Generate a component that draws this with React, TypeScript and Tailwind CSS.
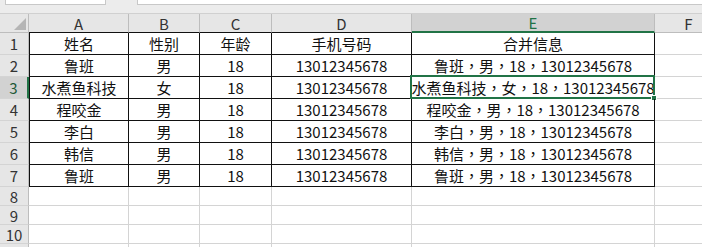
import React from 'react';

const people = [
  ['姓名', '性别', '年龄', '手机号码', '合并信息'],
  ['鲁班', '男', '18', '13012345678', '鲁班，男，18，13012345678'],
  ['水煮鱼科技', '女', '18', '13012345678', '水煮鱼科技，女，18，13012345678'],
  ['程咬金', '男', '18', '13012345678', '程咬金，男，18，13012345678'],
  ['李白', '男', '18', '13012345678', '李白，男，18，13012345678'],
  ['韩信', '男', '18', '13012345678', '韩信，男，18，13012345678'],
  ['鲁班', '男', '18', '13012345678', '鲁班，男，18，13012345678'],
];

const widths = ['w-[100px]', 'w-[71px]', 'w-[72px]', 'w-[140px]', 'w-[243px]'];
const letters = ['A', 'B', 'C', 'D', 'E'];

const RowHead = ({ n, active }: { n?: number; active?: boolean }) => (
  <div
    className={
      'flex h-full w-[29px] shrink-0 items-center justify-center border-b border-[#d4d4d4] text-[15px] ' +
      (active
        ? 'border-r-2 border-r-[#217346] bg-[#d2d2d2] text-[#1d5a38]'
        : 'border-r border-r-[#bdbdbd] bg-[#e6e6e6] text-[#333]')
    }
  >
    {n}
  </div>
);

const App = () => {
  return (
    <div className="h-[247px] w-[702px] overflow-hidden bg-white font-['Noto_Sans_CJK_SC',sans-serif] text-[#111]">
      {/* formula bar strip */}
      <div className="flex h-[13px] bg-[#ececec]">
        <div className="ml-[5px] h-[5px] w-[101px] border-b border-x border-[#c8c8c8] bg-white" />
        <div className="ml-[31px] h-[5px] flex-1 border-b border-l border-[#c8c8c8] bg-white" />
      </div>

      {/* column headers */}
      <div className="flex h-[20px] border-t border-[#d0d0d0] text-[15px] leading-none text-[#333]">
        <div className="relative w-[29px] shrink-0 border-r border-b border-[#bdbdbd] bg-[#e6e6e6]">
          <svg className="absolute right-[2px] bottom-[2px]" width="12" height="12" viewBox="0 0 12 12">
            <polygon points="12,0 12,12 0,12" fill="#b5b5b5" />
          </svg>
        </div>
        {letters.map((l, i) =>
          l === 'E' ? (
            <div
              key={l}
              className={`${widths[i]} flex shrink-0 items-center justify-center border-r border-r-[#bdbdbd] border-b-2 border-b-[#217346] bg-[#d2d2d2] text-[#217346]`}
            >
              {l}
            </div>
          ) : (
            <div
              key={l}
              className={`${widths[i]} flex shrink-0 items-center justify-center border-r border-r-[#bdbdbd] border-b border-b-[#111] bg-[#e6e6e6]`}
            >
              {l}
            </div>
          ),
        )}
        <div className="flex flex-1 items-center justify-center border-b border-[#bdbdbd] bg-[#e6e6e6] pl-[20px]">F</div>
      </div>

      {/* data rows */}
      {people.map((row, r) => (
        <div key={r} className="flex h-[22px] text-[15px] leading-none">
          <RowHead n={r + 1} active={r === 2} />
          {row.map((cell, c) => (
            <div
              key={c}
              className={`${widths[c]} relative flex shrink-0 items-center justify-center whitespace-nowrap border-r border-b border-[#111] ${c === 0 ? 'border-l' : ''} ${c === 4 ? "font-['Noto_Sans_CJK_TC',sans-serif]" : ''}`}
            >
              {cell}
              {r === 2 && c === 4 && (
                <div className="absolute -top-[2px] -left-[2px] -right-[1px] -bottom-[1px] border-2 border-[#217346]">
                  <div className="absolute -right-[4px] -bottom-[4px] h-[6px] w-[6px] border border-white bg-[#217346]" />
                </div>
              )}
            </div>
          ))}
          <div className="flex-1 border-b border-[#d4d4d4]" />
        </div>
      ))}

      {/* empty rows */}
      {[8, 9, 10].map((n) => (
        <div key={n} className="flex h-[19px] text-[15px] leading-none">
          <RowHead n={n} />
          {widths.map((w, c) => (
            <div key={c} className={`${w} shrink-0 border-r border-b border-[#d4d4d4]`} />
          ))}
          <div className="flex-1 border-b border-[#d4d4d4]" />
        </div>
      ))}
      <div className="flex h-[19px]">
        <RowHead />
        {widths.map((w, c) => (
          <div key={c} className={`${w} shrink-0 border-r border-[#d4d4d4]`} />
        ))}
      </div>
    </div>
  );
};

export default App;
